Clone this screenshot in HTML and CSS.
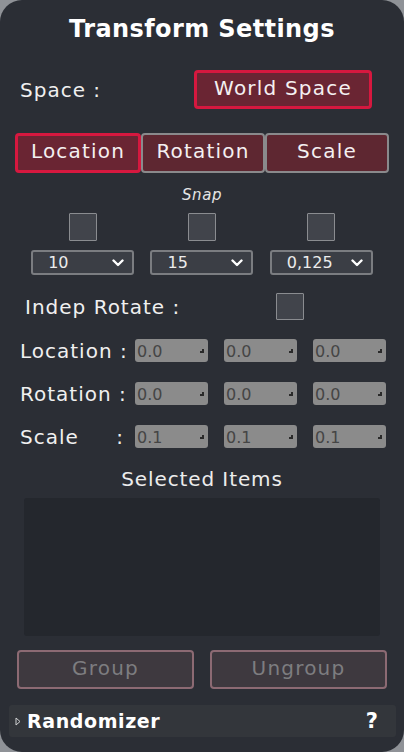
FILE: index.html
```html
<!DOCTYPE html>
<html>
<head>
<meta charset="utf-8">
<link rel="stylesheet" href="styles.css">
</head>
<body>
<div class="panel">
  <h1 class="title">Transform Settings</h1>

  <div class="space-row">
    <span class="label">Space :</span>
    <button class="btn btn-active space-btn">World Space</button>
  </div>

  <div class="tabs">
    <button class="btn tab btn-active">Location</button>
    <button class="btn tab">Rotation</button>
    <button class="btn tab">Scale</button>
  </div>

  <div class="snap-label">Snap</div>

  <div class="snap-grid">
    <div class="snap-col">
      <span class="check"></span>
      <div class="select"><span>10</span><svg class="chev" viewBox="0 0 12 8" width="12" height="8"><path d="M1.5 1.5 L6 6 L10.5 1.5" fill="none" stroke="#fff" stroke-width="2.4" stroke-linecap="round" stroke-linejoin="round"/></svg></div>
    </div>
    <div class="snap-col">
      <span class="check"></span>
      <div class="select"><span>15</span><svg class="chev" viewBox="0 0 12 8" width="12" height="8"><path d="M1.5 1.5 L6 6 L10.5 1.5" fill="none" stroke="#fff" stroke-width="2.4" stroke-linecap="round" stroke-linejoin="round"/></svg></div>
    </div>
    <div class="snap-col">
      <span class="check"></span>
      <div class="select"><span>0,125</span><svg class="chev" viewBox="0 0 12 8" width="12" height="8"><path d="M1.5 1.5 L6 6 L10.5 1.5" fill="none" stroke="#fff" stroke-width="2.4" stroke-linecap="round" stroke-linejoin="round"/></svg></div>
    </div>
  </div>

  <div class="indep-row">
    <span class="label">Indep Rotate :</span>
    <span class="check"></span>
  </div>

  <div class="vec-row">
    <span class="label vec-label">Location :</span>
    <div class="field"><span>0.0</span><i class="grip"></i></div>
    <div class="field"><span>0.0</span><i class="grip"></i></div>
    <div class="field"><span>0.0</span><i class="grip"></i></div>
  </div>
  <div class="vec-row">
    <span class="label vec-label">Rotation :</span>
    <div class="field"><span>0.0</span><i class="grip"></i></div>
    <div class="field"><span>0.0</span><i class="grip"></i></div>
    <div class="field"><span>0.0</span><i class="grip"></i></div>
  </div>
  <div class="vec-row">
    <span class="label vec-label scale-label"><span>Scale</span><span>:</span></span>
    <div class="field"><span>0.1</span><i class="grip"></i></div>
    <div class="field"><span>0.1</span><i class="grip"></i></div>
    <div class="field"><span>0.1</span><i class="grip"></i></div>
  </div>

  <div class="sel-title">Selected Items</div>
  <div class="sel-box"></div>

  <div class="group-row">
    <button class="btn btn-disabled">Group</button>
    <button class="btn btn-disabled">Ungroup</button>
  </div>

  <div class="rand-bar">
    <svg class="tri" viewBox="0 0 6 9" width="6" height="9"><path d="M1 1 L5 4.5 L1 8 Z" fill="none" stroke="#cfd0d2" stroke-width="1"/></svg>
    <span class="rand-text">Randomizer</span>
    <span class="help">?</span>
  </div>
</div>
</body>
</html>
```

FILE: styles.css
```css
* { box-sizing: border-box; }
html, body {
  margin: 0;
  padding: 0;
  background: #8f9297;
}
body {
  width: 404px;
  height: 752px;
  font-family: "DejaVu Sans", "Open Sans", sans-serif;
  color: #f2f2f2;
}
.panel {
  width: 404px;
  height: 752px;
  background: #2b2e35;
  border-radius: 22px;
  overflow: hidden;
  display: flex;
  flex-direction: column;
}
.title {
  margin: 0;
  height: 60px;
  padding-top: 13px;
  text-align: center;
  font-size: 24px;
  line-height: 32px;
  font-weight: bold;
  color: #ffffff;
  letter-spacing: 0.4px;
}
.label {
  font-size: 20px;
  letter-spacing: 1px;
  color: #f0f0f0;
}
.btn {
  font-family: inherit;
  font-size: 20px;
  letter-spacing: 1.2px;
  color: #f4f0f1;
  background: #5e2731;
  border: 2px solid #8a8a8c;
  border-radius: 4px;
  padding: 0;
  margin: 0;
}
.btn-active {
  border: 3px solid #d6183f;
  background: #6a2533;
}
.space-row {
  margin-top: 10px;
  height: 39px;
  display: flex;
  align-items: center;
  padding-left: 20px;
}
.space-btn {
  margin-left: auto;
  margin-right: 32px;
  width: 178px;
  height: 39px;
  padding-bottom: 4px;
}
.tabs {
  margin: 24px 15px 0 15px;
  height: 40px;
  display: flex;
}
.tab {
  flex: 1;
  height: 40px;
  padding-bottom: 5px;
}
.snap-label {
  margin-top: 11px;
  height: 22px;
  text-align: center;
  font-style: italic;
  font-size: 15px;
  line-height: 22px;
  letter-spacing: 0.6px;
  color: #e4e4e4;
}
.snap-grid {
  margin-top: 7px;
  padding: 0 23px;
  display: grid;
  grid-template-columns: 1fr 1fr 1fr;
}
.snap-col {
  display: flex;
  flex-direction: column;
  align-items: center;
}
.check {
  display: block;
  width: 28px;
  height: 28px;
  background: #41444b;
  border: 1px solid #8a8c90;
  border-radius: 1px;
}
.select {
  margin-top: 9px;
  width: 103px;
  height: 25px;
  background: #3b3e45;
  border: 2px solid #7b7d81;
  border-radius: 3px;
  display: flex;
  align-items: center;
  justify-content: space-between;
  padding: 0 8px 0 15px;
  font-size: 16px;
  color: #ececec;
}
.chev { display: block; }
.indep-row {
  margin-top: 17px;
  height: 28px;
  display: flex;
  align-items: center;
  padding-left: 25px;
}
.indep-row .label { padding-top: 1px; }
.indep-row .check {
  margin-left: 96px;
  height: 27px;
}
.vec-row {
  height: 23px;
  display: flex;
  align-items: center;
  padding-left: 20px;
  margin-top: 20px;
}
.indep-row + .vec-row { margin-top: 19px; }
.vec-label {
  width: 115px;
  white-space: nowrap;
}
.scale-label {
  display: flex;
  justify-content: space-between;
  padding-right: 11px;
}
.field {
  width: 73px;
  height: 23px;
  margin-right: 16px;
  background: #8b8b8b;
  border-radius: 3px;
  display: flex;
  align-items: center;
  justify-content: space-between;
  padding: 2px 4px 0 2px;
  font-size: 16px;
  color: #454545;
}
.field:last-child { margin-right: 0; }
.grip {
  width: 4px;
  height: 4px;
  border-right: 2px solid #2a2a2a;
  border-bottom: 2px solid #2a2a2a;
  margin-bottom: 2px;
}
.sel-title {
  margin-top: 19px;
  height: 25px;
  text-align: center;
  font-size: 20px;
  line-height: 25px;
  letter-spacing: 0.9px;
  color: #ececec;
}
.sel-box {
  margin: 6px 24px 0 24px;
  height: 138px;
  background: #24272d;
  border-radius: 3px;
}
.group-row {
  margin: 14px 17px 0 17px;
  display: flex;
  gap: 16px;
}
.btn-disabled {
  flex: 1;
  height: 39px;
  background: #3e393f;
  border: 2px solid #8c6a73;
  color: #7d7d80;
  padding-bottom: 3px;
}
.rand-bar {
  margin: 16px 8px 0 9px;
  height: 32px;
  background: #33363b;
  border-radius: 3px;
  display: flex;
  align-items: center;
  padding: 0 0 0 6px;
}
.tri { display: block; margin-right: 6px; }
.rand-text {
  font-size: 19px;
  font-weight: bold;
  color: #ffffff;
  letter-spacing: 0.6px;
}
.help {
  margin-left: auto;
  margin-right: 18px;
  font-size: 21px;
  font-weight: bold;
  color: #ffffff;
}
```
